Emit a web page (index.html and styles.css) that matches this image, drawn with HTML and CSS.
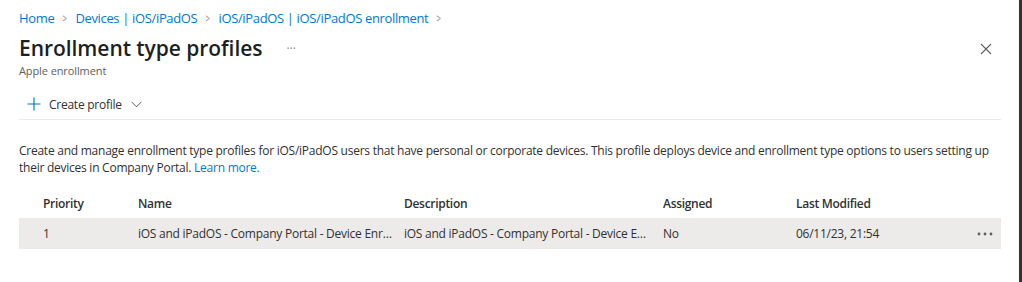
FILE: index.html
```html
<!DOCTYPE html>
<html lang="en">
<head>
    <meta charset="UTF-8">
    <title>Enrollment type profiles</title>
    <link rel="stylesheet" href="styles.css">
</head>
<body>
    <div class="blade">
        <nav class="breadcrumb">
            <a href="#">Home</a>
            <span class="sep">&gt;</span>
            <a href="#">Devices | iOS/iPadOS</a>
            <span class="sep">&gt;</span>
            <a href="#">iOS/iPadOS | iOS/iPadOS enrollment</a>
            <span class="sep">&gt;</span>
        </nav>

        <header class="blade-header">
            <div class="title-block">
                <div class="title-row">
                    <h1>Enrollment type profiles</h1>
                    <span class="more">&middot;&middot;&middot;</span>
                </div>
                <div class="subtitle">Apple enrollment</div>
            </div>
            <svg class="close" width="12" height="12" viewBox="0 0 12 12">
                <path d="M1 1 L11 11 M11 1 L1 11" stroke="#605e5c" stroke-width="1.1" fill="none"/>
            </svg>
        </header>

        <div class="toolbar">
            <button class="tool-btn">
                <svg width="14" height="14" viewBox="0 0 14 14">
                    <path d="M7 0.5 V13.5 M0.5 7 H13.5" stroke="#0078d4" stroke-width="1.2" fill="none"/>
                </svg>
                <span>Create profile</span>
                <svg class="chev" width="11" height="7" viewBox="0 0 11 7">
                    <path d="M0.5 0.8 L5.5 5.8 L10.5 0.8" stroke="#605e5c" stroke-width="1" fill="none"/>
                </svg>
            </button>
        </div>

        <p class="intro">
            Create and manage enrollment type profiles for iOS/iPadOS users that have personal or corporate devices. This profile deploys device and enrollment type options to users setting up their devices in Company Portal. <a href="#">Learn more.</a>
        </p>

        <div class="grid">
            <div class="grid-row head">
                <div class="cell">Priority</div>
                <div class="cell">Name</div>
                <div class="cell">Description</div>
                <div class="cell">Assigned</div>
                <div class="cell">Last Modified</div>
                <div class="cell"></div>
            </div>
            <div class="grid-row item">
                <div class="cell">1</div>
                <div class="cell">iOS and iPadOS - Company Portal - Device Enrollment</div>
                <div class="cell">iOS and iPadOS - Company Portal - Device Enrollment</div>
                <div class="cell">No</div>
                <div class="cell">06/11/23, 21:54</div>
                <div class="cell actions">
                    <svg width="16" height="4" viewBox="0 0 16 4">
                        <circle cx="2" cy="2" r="1.4" fill="#605e5c"/>
                        <circle cx="8" cy="2" r="1.4" fill="#605e5c"/>
                        <circle cx="14" cy="2" r="1.4" fill="#605e5c"/>
                    </svg>
                </div>
            </div>
        </div>
    </div>
</body>
</html>
```

FILE: styles.css
```css
body {
    margin: 0;
    background: #ffffff;
    font-family: "Open Sans", sans-serif;
    color: #323130;
    letter-spacing: -0.28px;
}

.blade {
    height: 282px;
    box-sizing: border-box;
    border-right: 3px solid #333333;
    padding: 8px 18px 0 19px;
}

.breadcrumb {
    font-size: 13px;
    height: 20px;
    line-height: 20px;
    display: flex;
    gap: 7px;
    letter-spacing: -0.35px;
}

.breadcrumb a {
    color: #0078d4;
    text-decoration: none;
}

.breadcrumb .sep {
    color: #8a8886;
    transform: scaleX(0.6);
}

.blade-header {
    display: flex;
    justify-content: space-between;
    align-items: flex-start;
}

.title-row {
    display: flex;
    align-items: center;
    height: 40px;
}

h1 {
    margin: 0;
    font-size: 21px;
    font-weight: 600;
    color: #201f1e;
    letter-spacing: -0.05px;
}

.more {
    margin-left: 24px;
    font-size: 12px;
    color: #8a8886;
    letter-spacing: 0;
}

.subtitle {
    font-size: 11px;
    color: #605e5c;
    margin-top: -5px;
    letter-spacing: -0.1px;
}

.close {
    margin: 15px 9px 0 0;
}

.toolbar {
    margin-top: 13px;
    height: 26px;
    border-bottom: 1px solid #edebe9;
    padding-bottom: 2px;
}

.tool-btn {
    display: flex;
    align-items: center;
    gap: 8px;
    border: 0;
    background: none;
    font: inherit;
    font-size: 12px;
    letter-spacing: -0.25px;
    color: #323130;
    padding: 0 0 0 8px;
    height: 26px;
}

.tool-btn .chev {
    margin-left: 1px;
}

.intro {
    margin: 22px 0 0;
    font-size: 12px;
    line-height: 17px;
    letter-spacing: -0.25px;
}

.intro a {
    color: #0078d4;
    text-decoration: none;
}

.grid {
    margin-top: 12px;
}

.grid-row {
    display: grid;
    grid-template-columns: 95px 266px 259px 133px 1fr 40px;
    font-size: 12px;
    letter-spacing: -0.25px;
    padding-left: 24px;
}

.grid-row.head {
    height: 30px;
    align-items: center;
    font-weight: 600;
    letter-spacing: -0.3px;
    color: #323130;
}

.grid-row.item {
    height: 31px;
    align-items: center;
    background: #edebe9;
}

.cell {
    white-space: nowrap;
    overflow: hidden;
    text-overflow: ellipsis;
    padding-right: 10px;
}

.actions {
    display: flex;
    align-items: center;
    justify-content: flex-end;
    padding-right: 8px;
}
```
